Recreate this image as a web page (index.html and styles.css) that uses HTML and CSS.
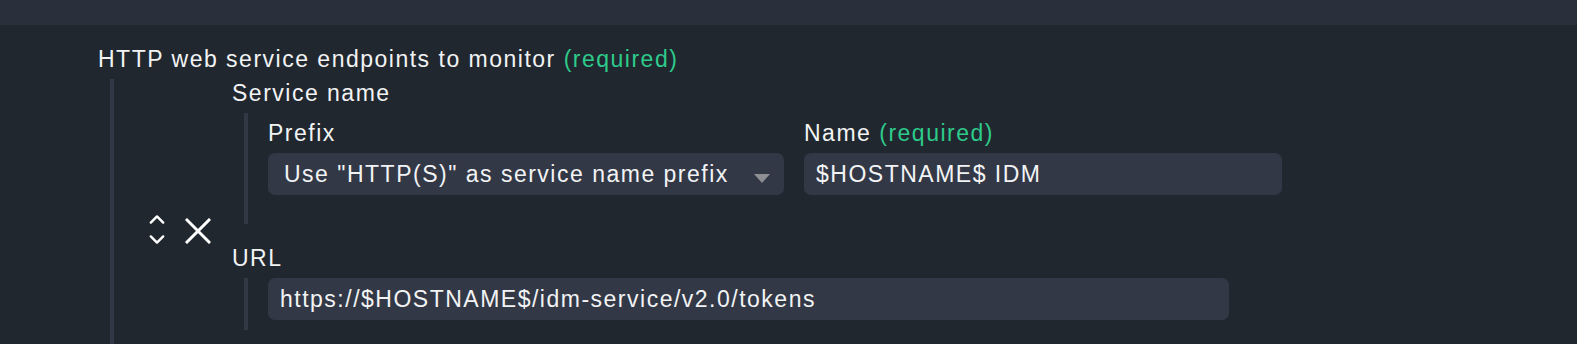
FILE: index.html
```html
<!DOCTYPE html>
<html lang="en">
<head>
<meta charset="utf-8">
<title>HTTP web service endpoints</title>
<link rel="stylesheet" href="styles.css">
</head>
<body>
<div class="topbar"></div>
<main class="content">
  <div class="title">HTTP web service endpoints to monitor <span class="req">(required)</span></div>
  <div class="list">
    <div class="entry">
      <div class="controls">
        <svg class="icon-move" width="16" height="31" viewBox="0 0 16 31" aria-hidden="true">
          <polyline points="1.8,8.6 8,2.4 14.2,8.6" fill="none" stroke="#ffffff" stroke-width="2.4" stroke-linecap="round" stroke-linejoin="round"/>
          <polyline points="1.8,22.4 8,28.6 14.2,22.4" fill="none" stroke="#ffffff" stroke-width="2.4" stroke-linecap="round" stroke-linejoin="round"/>
        </svg>
        <svg class="icon-del" width="26" height="26" viewBox="0 0 26 26" aria-hidden="true">
          <line x1="2" y1="2" x2="24" y2="24" stroke="#ffffff" stroke-width="3" stroke-linecap="square"/>
          <line x1="24" y1="2" x2="2" y2="24" stroke="#ffffff" stroke-width="3" stroke-linecap="square"/>
        </svg>
      </div>
      <div class="fields">
        <div class="label">Service name</div>
        <div class="group">
          <div class="row">
            <div class="field prefix-field">
              <div class="label sub-label">Prefix</div>
              <div class="select">
                <span>Use "HTTP(S)" as service name prefix</span>
                <span class="caret"></span>
              </div>
            </div>
            <div class="field name-field">
              <div class="label sub-label">Name <span class="req">(required)</span></div>
              <div class="input">$HOSTNAME$ IDM</div>
            </div>
          </div>
        </div>
        <div class="label url-label">URL</div>
        <div class="group url-group">
          <div class="input url-input">https://$HOSTNAME$/idm-service/v2.0/tokens</div>
        </div>
      </div>
    </div>
  </div>
</main>
</body>
</html>
```
FILE: styles.css
```css
html, body {
  margin: 0;
  padding: 0;
  overflow: hidden;
  background: #21272f;
  color: #f2f3f4;
  font-family: "Liberation Sans", Arial, sans-serif;
  font-size: 23px;
  letter-spacing: 1.5px;
}

.topbar {
  height: 25px;
  background: #29303b;
}

.content {
  padding: 21px 0 0 98px;
}

.title {
  line-height: 27px;
  white-space: nowrap;
}

.req {
  color: #2dcb8b;
}

.list {
  margin: 6px 0 0 12px;
  border-left: 4px solid #323846;
}

.entry {
  display: flex;
  padding: 0 0 50px 35px;
}

.controls {
  align-self: center;
  display: flex;
  align-items: center;
  gap: 20px;
  margin: 50px 21px 0 0;
}

.icon-move,
.icon-del {
  display: block;
}

.icon-move {
  margin-top: -1px;
}

.icon-del {
  margin-top: 2px;
}

.fields {
  display: flex;
  flex-direction: column;
  align-items: flex-start;
}

.label {
  line-height: 27px;
  padding-top: 1px;
  white-space: nowrap;
}

.group {
  margin: 6px 0 0 12px;
  border-left: 4px solid #323846;
  padding: 0 0 29px 20px;
}

.row {
  display: flex;
  gap: 20px;
}

.field {
  display: flex;
  flex-direction: column;
}

.sub-label {
  margin: 6px 0 6px;
}

.select,
.input {
  box-sizing: border-box;
  height: 42px;
  line-height: 42px;
  background: #323846;
  border-radius: 7px;
  white-space: nowrap;
}

.select {
  width: 516px;
  display: flex;
  align-items: center;
  justify-content: space-between;
  padding: 0 14px 0 16px;
}

.caret {
  width: 0;
  height: 0;
  border-left: 8px solid transparent;
  border-right: 8px solid transparent;
  border-top: 9px solid #8e8f92;
  margin-top: 8px;
}

.input {
  padding: 0 12px;
}

.name-field .input {
  width: 478px;
}

.url-label {
  margin-top: 20px;
}

.url-group {
  padding-bottom: 10px;
}

.url-input {
  width: 961px;
}
```
